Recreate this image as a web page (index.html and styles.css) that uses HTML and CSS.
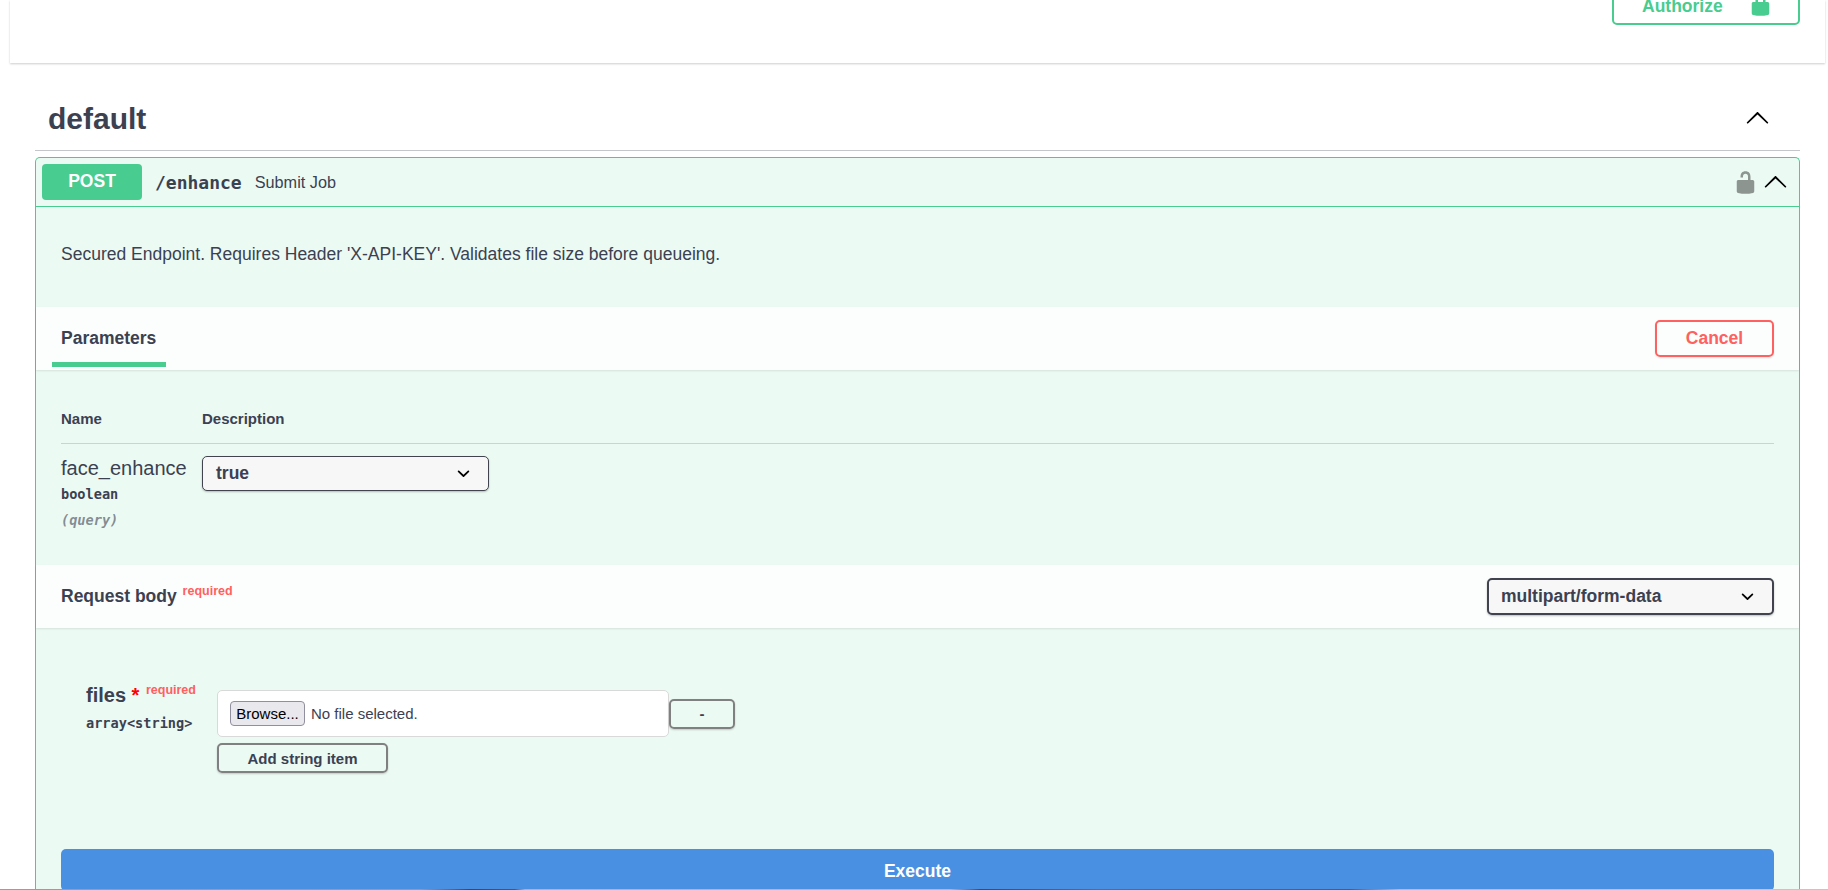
FILE: index.html
```html
<!DOCTYPE html>
<html lang="en">
<head>
    <meta charset="UTF-8">
    <title>Swagger UI</title>
    <link rel="stylesheet" href="styles.css">
</head>
<body>
    <header class="topbar">
        <button class="authorize-btn">
            Authorize
            <svg class="icon-lock" viewBox="0 0 20 20" width="25" height="25"><path d="M15.8 8H14V5.6C14 2.703 12.665 1 10 1 7.334 1 6 2.703 6 5.6V8H4c-.553 0-1 .646-1 1.199V17c0 .549.428 1.139.951 1.307l1.197.387C5.672 18.861 6.55 19 7.1 19h5.8c.549 0 1.428-.139 1.951-.307l1.196-.387c.524-.167.953-.757.953-1.306V9.199C17 8.646 16.352 8 15.8 8zM12 8H8V5.199C8 3.754 8.797 3 10 3c1.203 0 2 .754 2 2.199V8z"/></svg>
        </button>
    </header>

    <section class="tag-section">
        <div class="tag-header">
            <h3 class="tag-title">default</h3>
            <svg class="icon-arrow" viewBox="0 0 20 20" width="25" height="25"><path transform="rotate(180 10 10)" d="M17.418 6.109c.272-.268.709-.268.979 0s.271.701 0 .969l-7.908 7.83c-.27.268-.707.268-.979 0l-7.908-7.83c-.27-.268-.27-.701 0-.969.271-.268.709-.268.979 0L10 13.25l7.418-7.141z"/></svg>
        </div>

        <div class="opblock">
            <div class="summary">
                <span class="method">POST</span>
                <span class="path">/enhance</span>
                <span class="summary-text">Submit Job</span>
                <svg class="icon-unlocked" viewBox="0 0 20 20" width="25" height="25"><path d="M15.8 8H14V5.6C14 2.703 12.665 1 10 1 7.334 1 6 2.703 6 5.6V6h2v-.801C8 3.754 8.797 3 10 3c1.203 0 2 .754 2 2.199V8H4c-.553 0-1 .646-1 1.199V17c0 .549.428 1.139.951 1.307l1.197.387C5.672 18.861 6.55 19 7.1 19h5.8c.549 0 1.428-.139 1.951-.307l1.196-.387c.524-.167.953-.757.953-1.306V9.199C17 8.646 16.352 8 15.8 8z"/></svg>
                <svg class="icon-arrow" viewBox="0 0 20 20" width="25" height="25"><path transform="rotate(180 10 10)" d="M17.418 6.109c.272-.268.709-.268.979 0s.271.701 0 .969l-7.908 7.83c-.27.268-.707.268-.979 0l-7.908-7.83c-.27-.268-.27-.701 0-.969.271-.268.709-.268.979 0L10 13.25l7.418-7.141z"/></svg>
            </div>

            <div class="description">
                <p>Secured Endpoint. Requires Header 'X-API-KEY'. Validates file size before queueing.</p>
            </div>

            <div class="band band-tabs">
                <div class="tab">Parameters</div>
                <button class="cancel-btn">Cancel</button>
            </div>

            <div class="params">
                <div class="params-head">
                    <div class="col-name">Name</div>
                    <div>Description</div>
                </div>
                <div class="params-row">
                    <div class="col-name">
                        <div class="param-name">face_enhance</div>
                        <div class="param-type">boolean</div>
                        <div class="param-in">(query)</div>
                    </div>
                    <div class="select select-param">
                        <span>true</span>
                        <svg viewBox="0 0 20 20" width="25" height="25"><path d="M13.418 7.859a.695.695 0 0 1 .978 0 .68.68 0 0 1 0 .969l-3.908 3.83a.697.697 0 0 1-.979 0l-3.908-3.83a.68.68 0 0 1 0-.969.695.695 0 0 1 .978 0L10 11l3.418-3.141z"/></svg>
                    </div>
                </div>
            </div>

            <div class="band band-body">
                <div class="body-title">Request body <sup class="required">required</sup></div>
                <div class="select select-media">
                    <span>multipart/form-data</span>
                    <svg viewBox="0 0 20 20" width="25" height="25"><path d="M13.418 7.859a.695.695 0 0 1 .978 0 .68.68 0 0 1 0 .969l-3.908 3.83a.697.697 0 0 1-.979 0l-3.908-3.83a.68.68 0 0 1 0-.969.695.695 0 0 1 .978 0L10 11l3.418-3.141z"/></svg>
                </div>
            </div>

            <div class="form-body">
                <div class="field-label">
                    <div class="field-name">files <span class="star">*</span> <sup class="required">required</sup></div>
                    <div class="param-type">array&lt;string&gt;</div>
                </div>
                <div class="field-input">
                    <div class="file-row">
                        <div class="file-box">
                            <button class="browse-btn">Browse...</button>
                            <span>No file selected.</span>
                        </div>
                        <button class="small-btn remove-btn">-</button>
                    </div>
                    <button class="small-btn add-btn">Add string item</button>
                </div>
            </div>

            <div class="execute-wrap">
                <button class="execute-btn">Execute</button>
            </div>
        </div>
    </section>

    <div class="photo-edge"></div>
</body>
</html>
```

FILE: styles.css
```css
html, body {
    height: 890px;
    overflow: hidden;
}

body {
    margin: 0;
    font-family: "Liberation Sans", Arial, sans-serif;
    color: #3b4151;
    background-color: white;
}

button {
    font-family: inherit;
    cursor: pointer;
}

/* Top card, scrolled so the button is cut off */
.topbar {
    box-sizing: border-box;
    width: 1815px;
    height: 63px;
    margin-left: 10px;
    padding: 0 25px 38px 0;
    display: flex;
    justify-content: flex-end;
    align-items: flex-end;
    background-color: white;
    box-shadow: 0 1px 2px rgba(0, 0, 0, 0.2);
}

.authorize-btn {
    flex-shrink: 0;
    box-sizing: border-box;
    width: 188px;
    height: 37px;
    padding: 0 25px 0 28px;
    display: flex;
    align-items: center;
    justify-content: space-between;
    background: transparent;
    border: 2px solid #49cc90;
    border-radius: 5px;
    color: #49cc90;
    font-size: 17.5px;
    font-weight: bold;
}

.icon-lock {
    fill: #49cc90;
    margin-bottom: 5px;
}

.tag-section {
    width: 1765px;
    margin-left: 35px;
}

.tag-header {
    padding: 43px 30px 19px 13px;
    display: flex;
    align-items: center;
    justify-content: space-between;
    border-bottom: 1px solid rgba(59, 65, 81, 0.3);
}

.tag-title {
    margin: 0;
    font-size: 30px;
    line-height: 25px;
}

.icon-arrow {
    display: block;
    flex-shrink: 0;
}

/* Operation block */
.opblock {
    margin-top: 6px;
    border: 1px solid #49cc90;
    border-bottom: none;
    border-radius: 5px 5px 0 0;
    background-color: rgba(73, 204, 144, 0.1);
}

.summary {
    padding: 6px 11px 6px 6px;
    display: flex;
    align-items: center;
    border-bottom: 1px solid #49cc90;
}

.method {
    width: 100px;
    height: 36px;
    margin-right: 13px;
    background-color: #49cc90;
    border-radius: 4px;
    color: white;
    font-size: 17.5px;
    font-weight: bold;
    line-height: 34px;
    text-align: center;
}

.path {
    margin-right: 13px;
    font-family: "DejaVu Sans Mono", monospace;
    font-size: 18px;
    font-weight: bold;
}

.summary-text {
    flex: 1;
    font-size: 16.25px;
}

.icon-unlocked {
    display: block;
    margin-right: 5px;
    opacity: 0.4;
}

.description {
    height: 100px;
    box-sizing: border-box;
    padding: 36px 25px 0;
}

.description p {
    margin: 0;
    font-size: 17.5px;
    line-height: 22px;
}

.band {
    padding: 0 25px;
    display: flex;
    align-items: center;
    justify-content: space-between;
    background-color: rgba(255, 255, 255, 0.8);
    box-shadow: 0 1px 2px rgba(0, 0, 0, 0.1);
}

.band-tabs {
    height: 63px;
    padding-left: 16px;
}

.tab {
    box-sizing: border-box;
    height: 60px;
    align-self: flex-start;
    padding: 7px 10px 0 9px;
    border-bottom: 5px solid #49cc90;
    font-size: 17.5px;
    font-weight: bold;
    line-height: 48px;
}

.cancel-btn {
    box-sizing: border-box;
    width: 119px;
    height: 37px;
    background: transparent;
    border: 2px solid #ff6060;
    border-radius: 5px;
    color: #ff6060;
    font-size: 17.5px;
    font-weight: bold;
    box-shadow: 0 1px 2px rgba(0, 0, 0, 0.1);
}

/* Parameters table */
.params {
    height: 195px;
    box-sizing: border-box;
    padding: 40px 25px 0;
}

.params-head {
    display: flex;
    padding-bottom: 15px;
    border-bottom: 1px solid rgba(59, 65, 81, 0.2);
    font-size: 15px;
    font-weight: bold;
    line-height: 18px;
}

.col-name {
    width: 141px;
}

.params-row {
    display: flex;
    padding-top: 12px;
}

.param-name {
    font-size: 20px;
    line-height: 24px;
}

.param-type {
    margin-top: 5px;
    font-family: "DejaVu Sans Mono", monospace;
    font-size: 13.6px;
    font-weight: bold;
    line-height: 18px;
}

.param-in {
    margin-top: 8px;
    font-family: "DejaVu Sans Mono", monospace;
    font-size: 13.6px;
    font-weight: bold;
    font-style: italic;
    line-height: 18px;
    color: rgba(59, 65, 81, 0.6);
}

.select {
    box-sizing: border-box;
    width: 287px;
    padding: 0 12px;
    display: flex;
    align-items: center;
    justify-content: space-between;
    background-color: #f7f7f7;
    border: 2px solid #41444e;
    border-radius: 5px;
    box-shadow: 0 1px 2px rgba(0, 0, 0, 0.25);
    font-size: 17.5px;
    font-weight: bold;
}

.select-param {
    height: 35px;
    padding-left: 13px;
    border-width: 1px;
}

.select-media {
    height: 37px;
}

.band-body {
    height: 63px;
}

.body-title {
    font-size: 17.5px;
    font-weight: bold;
}

.required {
    margin-left: 1px;
    color: #ff6060;
    font-size: 12.5px;
    font-weight: bold;
    line-height: 0;
    vertical-align: 7px;
}

/* Form */
.form-body {
    padding: 55px 25px 0 50px;
    display: flex;
}

.field-label {
    width: 131px;
}

.field-name {
    font-size: 20px;
    font-weight: bold;
    line-height: 24px;
}

.field-label .param-type {
    margin-top: 7px;
}

.field-name .required {
    vertical-align: 8px;
}

.star {
    color: red;
}

.field-input {
    padding-top: 7px;
}

.file-row {
    display: flex;
    align-items: center;
}

.file-box {
    box-sizing: border-box;
    width: 452px;
    height: 47px;
    padding: 0 12px;
    display: flex;
    align-items: center;
    background-color: white;
    border: 1px solid #d9d9d9;
    border-radius: 5px;
    font-size: 15px;
}

.browse-btn {
    box-sizing: border-box;
    width: 75px;
    height: 25px;
    margin-right: 6px;
    padding: 0;
    background-color: #e9e9ed;
    border: 1px solid #8f8f9d;
    border-radius: 4px;
    color: black;
    font-size: 15px;
}

.small-btn {
    box-sizing: border-box;
    height: 30px;
    background: transparent;
    border: 2px solid #808080;
    border-radius: 5px;
    box-shadow: 0 1px 2px rgba(0, 0, 0, 0.2);
    color: #3b4151;
    font-size: 15px;
    font-weight: bold;
}

.remove-btn {
    width: 66px;
}

.add-btn {
    display: block;
    width: 171px;
    margin-top: 6px;
}

.execute-wrap {
    padding: 76px 25px 0;
}

.execute-btn {
    display: block;
    width: 100%;
    height: 42px;
    padding-top: 4px;
    background-color: #4990e2;
    border: none;
    border-radius: 5px;
    color: white;
    font-size: 17.5px;
    font-weight: bold;
}

/* One pixel of the page background photo shows at the very bottom */
.photo-edge {
    position: fixed;
    left: 0;
    right: 0;
    bottom: 0;
    height: 1px;
    background: linear-gradient(to right, #a39d8f 0, #a09a8e 420px, #4a4640 470px, #5a5650 515px, #c4b095 525px, #c8b498 950px, #4d4a45 980px, #6d6a65 1100px, #5f5a55 1350px, #c9b89e 1400px, #d4c4a8 1828px);
}
```
